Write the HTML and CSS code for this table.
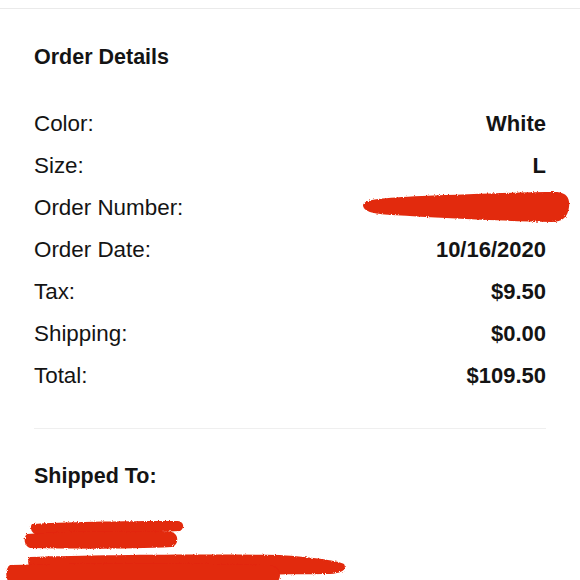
FILE: index.html
```html
<!DOCTYPE html>
<html>
<head>
<meta charset="utf-8">
<link rel="stylesheet" href="styles.css">
</head>
<body>
<svg class="defs" width="0" height="0">
  <filter id="rough" x="-5%" y="-20%" width="110%" height="140%">
    <feTurbulence type="fractalNoise" baseFrequency="0.9" numOctaves="2" result="n"/>
    <feDisplacementMap in="SourceGraphic" in2="n" scale="3"/>
  </filter>
</svg>
<div class="topbar"></div>
<main class="page">
  <h2 class="heading">Order Details</h2>
  <div class="details">
    <div class="row"><span class="label">Color:</span><span class="value">White</span></div>
    <div class="row"><span class="label">Size:</span><span class="value">L</span></div>
    <div class="row"><span class="label">Order Number:</span>
      <svg class="redact-num" width="210" height="42" viewBox="0 0 210 42">
        <path filter="url(#rough)" fill="#e2290b" d="M1,18 C3,12 20,11 60,9 C110,7 160,5 195,5 C206,6 208,13 207,20 C206,30 200,35 190,35 C140,34 80,31 30,28 C10,27 1,24 1,18 Z"/>
      </svg>
    </div>
    <div class="row"><span class="label">Order Date:</span><span class="value">10/16/2020</span></div>
    <div class="row"><span class="label">Tax:</span><span class="value">$9.50</span></div>
    <div class="row"><span class="label">Shipping:</span><span class="value">$0.00</span></div>
    <div class="row"><span class="label">Total:</span><span class="value">$109.50</span></div>
  </div>
  <hr class="divider">
  <h2 class="heading heading-ship">Shipped To:</h2>
  <svg class="redact-addr" width="580" height="65" viewBox="0 0 580 65">
    <g filter="url(#rough)" fill="#e2290b">
      <path d="M32,9 C60,7 120,6 178,6 C184,7 185,13 180,16 C150,18 100,20 40,21 C32,20 29,13 32,9 Z"/>
      <path d="M27,19 C60,16 120,16 172,17 C179,19 179,30 172,32 C130,34 80,34 30,33 C24,31 23,22 27,19 Z"/>
      <path d="M30,42 C100,40 200,39 280,40 C310,42 335,45 344,49 C347,54 343,58 330,59 C260,60 150,59 40,58 C28,56 26,45 30,42 Z"/>
      <path d="M10,50 C80,48 180,48 270,50 C280,53 282,60 278,66 L8,66 C5,60 6,53 10,50 Z"/>
    </g>
  </svg>
</main>
</body>
</html>
```
FILE: styles.css
```css
html, body {
  margin: 0;
  padding: 0;
  background: #ffffff;
}
body {
  font-family: "Liberation Sans", Arial, Helvetica, sans-serif;
  color: #141414;
  width: 580px;
  height: 580px;
  overflow: hidden;
}
.defs {
  position: absolute;
  width: 0;
  height: 0;
}
.topbar {
  height: 8px;
  border-bottom: 1px solid #eaeaea;
}
.page {
  padding: 0 34px;
}
.heading {
  margin: 34px 0 0;
  font-size: 21.5px;
  line-height: 28px;
  font-weight: 700;
}
.details {
  margin-top: 32px;
  display: flex;
  flex-direction: column;
}
.row {
  display: flex;
  justify-content: space-between;
  align-items: center;
  height: 42px;
  line-height: 42px;
  font-size: 22.4px;
}
.label {
  font-weight: 400;
}
.value {
  font-weight: 700;
  font-size: 22px;
}
.redact-num {
  display: block;
  margin-right: -26px;
}
.divider {
  margin: 31px 0 0;
  border: 0;
  border-top: 1px solid #efefef;
  height: 0;
}
.heading-ship {
  margin-top: 33px;
}
.redact-addr {
  display: block;
  margin: 25px 0 0 -34px;
}
```
